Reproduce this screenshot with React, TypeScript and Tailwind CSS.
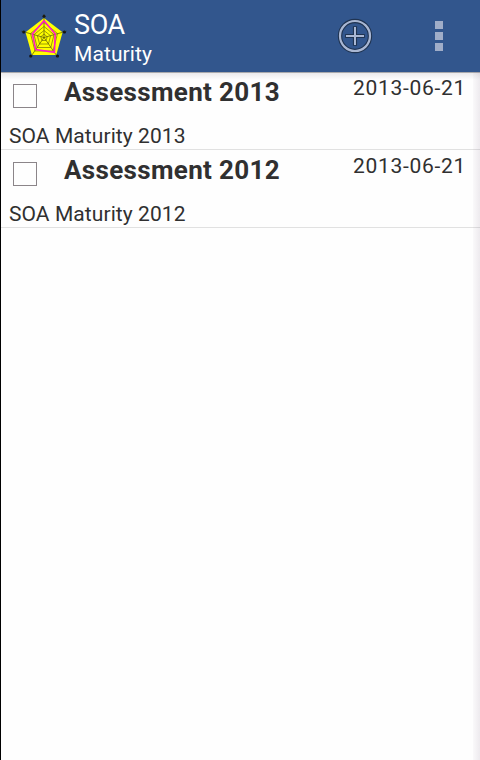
import React from 'react';

interface Assessment {
  id: number;
  title: string;
  date: string;
  description: string;
}

const ASSESSMENTS: Assessment[] = [
  { id: 1, title: 'Assessment 2013', date: '2013-06-21', description: 'SOA Maturity 2013' },
  { id: 2, title: 'Assessment 2012', date: '2013-06-21', description: 'SOA Maturity 2012' },
];

const RadarLogo: React.FC = () => (
  <svg className="w-12 h-12 shrink-0" viewBox="20 12 48 48" fill="none">
    <g fill="#111">
      <circle cx="44" cy="16.3" r="1.5" />
      <circle cx="23.8" cy="32" r="1.6" />
      <circle cx="64.4" cy="32" r="1.6" />
      <circle cx="30.8" cy="56" r="1.6" />
      <circle cx="57.4" cy="56" r="1.6" />
    </g>
    <polygon points="44,18 62.6,32.3 56.3,55 31.9,55 25.5,32.3" fill="#ffff00" />
    <path d="M44 37.5V14M44 37.5L21.5 31.2M44 37.5L66.5 31.2M44 37.5L30.2 57.5M44 37.5L58 57.5" stroke="#33330a" strokeWidth="0.6" />
    <g stroke="#66660a" strokeWidth="0.65">
      <polygon points="44,22.5 57.5,33.5 53,51 35,51 30.5,33.5" />
      <polygon points="44,26.5 54,34.7 50.8,47.5 37.2,47.5 34,34.7" />
      <polygon points="44,30.5 50.6,35.8 48.4,44 39.6,44 37.4,35.8" />
      <polygon points="44,34 47.2,36.8 46.1,40.5 41.9,40.5 40.8,36.8" />
    </g>
    <polygon points="44,20.7 55.2,34 54.4,52.3 35.7,49.6 32.4,34" stroke="#ff18c8" strokeWidth="1.6" />
  </svg>
);

const AddIcon: React.FC = () => (
  <svg className="w-9 h-9" viewBox="0 0 36 36" fill="none">
    <circle cx="18" cy="18" r="15" stroke="#203452" strokeWidth="4.4" />
    <path d="M18 8.2v19.6M8.2 18h19.6" stroke="#203452" strokeWidth="4.2" />
    <circle cx="18" cy="18" r="15" stroke="#a9b7d3" strokeWidth="2.2" />
    <path d="M18 9v18M9 18h18" stroke="#a9b7d3" strokeWidth="2" />
  </svg>
);

const ActionBar: React.FC = () => (
  <header className="h-[72px] shrink-0 flex items-center bg-[#32568d] pl-[19px] text-white">
    <RadarLogo />
    <div className="ml-1.5 pt-[3px]">
      <h1 className="text-[27px] leading-[32px] tracking-[-0.4px]">SOA</h1>
      <h2 className="text-[21px] leading-[26px] tracking-[0.1px]">Maturity</h2>
    </div>
    <button className="ml-auto mr-[62px]"><AddIcon /></button>
    <button className="flex flex-col gap-[3px] mr-[37px]">
      <span className="size-2 bg-[#a0adc8]" />
      <span className="size-2 bg-[#a0adc8]" />
      <span className="size-2 bg-[#a0adc8]" />
    </button>
  </header>
);

const AssessmentRow: React.FC<{ item: Assessment }> = ({ item }) => (
  <li className="h-[78px] border-b border-[#e1e1e1] flex flex-col">
    <div className="flex items-start h-[51px]">
      <span className="mt-3 ml-3 w-6 h-6 border border-[#8b8589] shrink-0" />
      <span className="ml-[27px] mt-[4px] text-[26px] leading-[32px] font-bold tracking-[0.33px]">{item.title}</span>
      <span className="ml-auto mr-[14px] mt-[3px] text-[21px] leading-[26px] tracking-[0.7px]">{item.date}</span>
    </div>
    <p className="ml-2 text-[21px] leading-[26px] tracking-[0.08px]">{item.description}</p>
  </li>
);

export default function App() {
  return (
    <div className="w-[480px] h-[760px] flex flex-col bg-white border-l border-black overflow-hidden font-['Roboto',sans-serif] text-[#303030]">
      <ActionBar />
      <main className="relative flex-1 bg-[#fefefe]">
        <ul>
          {ASSESSMENTS.map((item) => (
            <AssessmentRow key={item.id} item={item} />
          ))}
        </ul>
        {/* scroll edge shading */}
        <div className="absolute inset-x-0 top-0 h-2 border-t border-[#a9a9ac] bg-linear-to-b from-[#78708024] to-transparent" />
        <div className="absolute inset-y-0 right-0 w-[7px] bg-linear-to-r from-[#78608008] to-[#78608020]" />
      </main>
    </div>
  );
}
